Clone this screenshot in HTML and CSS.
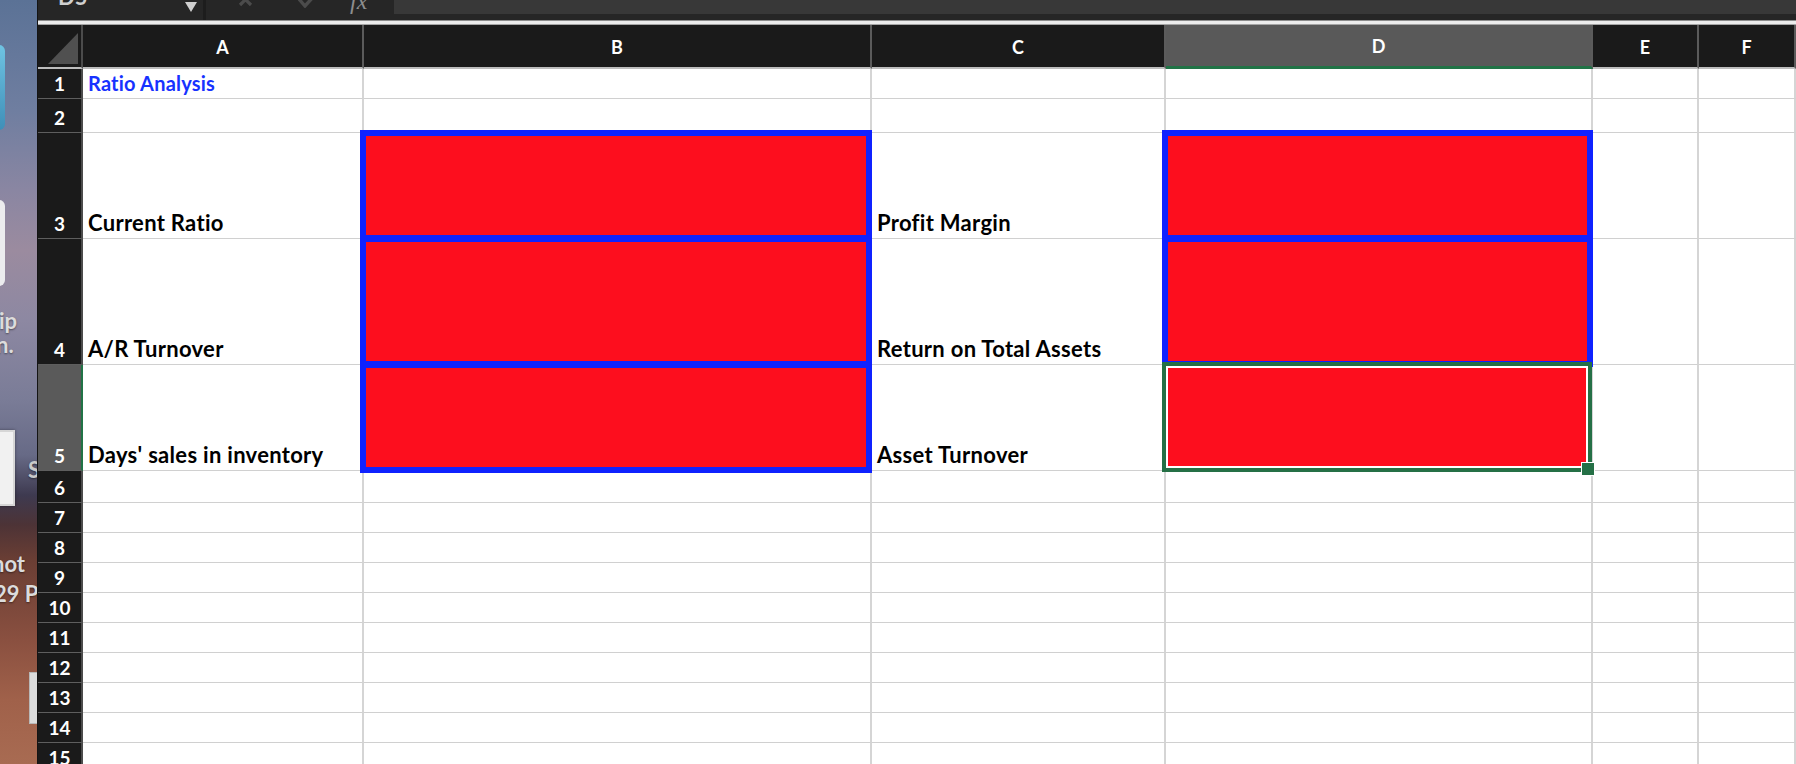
FILE: index.html
```html
<!DOCTYPE html>
<html lang="en">
<head>
<meta charset="utf-8">
<title>Ratio Analysis</title>
<link rel="stylesheet" href="styles.css">
</head>
<body>
<div class="screen">
  <div class="desktop">
    <div class="dk-icon dk-blue"></div>
    <div class="dk-icon dk-white"></div>
    <span class="dk-text dk-ip">ip</span>
    <span class="dk-text dk-n">n.</span>
    <div class="dk-thumb"></div>
    <span class="dk-text dk-s">S</span>
    <span class="dk-text dk-hot">hot</span>
    <span class="dk-text dk-29">29 P</span>
    <div class="dk-doc"></div>
  </div>
  <div class="excel">
    <div class="toolbar">
      <div class="namebox">
        <span class="nb-text">D5</span>
        <span class="nb-arrow"></span>
      </div>
      <div class="tb-icons">
        <svg class="tb-x" width="22" height="8" viewBox="0 0 22 8"><path d="M3 -6 L14 5 M14 -6 L3 5" stroke="#4b4b4b" stroke-width="3.2" fill="none"/></svg>
        <svg class="tb-check" width="18" height="8" viewBox="0 0 18 8"><path d="M0 -2 L7 6 L16 -4" stroke="#4b4b4b" stroke-width="3.4" fill="none"/></svg>
        <span class="tb-fx">fx</span>
      </div>
      <div class="formula"></div>
    </div>
    <div class="divider"></div>
    <div class="sheet">
      <div class="corner"><span class="tri"></span></div>
      <div class="ch">A</div><div class="ch">B</div><div class="ch">C</div><div class="ch ch-sel">D</div><div class="ch">E</div><div class="ch">F</div>

      <div class="rh">1</div><div class="c title">Ratio Analysis</div><div class="c"></div><div class="c"></div><div class="c"></div><div class="c"></div><div class="c"></div>
      <div class="rh">2</div><div class="c"></div><div class="c"></div><div class="c"></div><div class="c"></div><div class="c"></div><div class="c"></div>
      <div class="rh">3</div><div class="c label">Current Ratio</div><div class="c box"></div><div class="c label">Profit Margin</div><div class="c box"></div><div class="c"></div><div class="c"></div>
      <div class="rh">4</div><div class="c label">A/R Turnover</div><div class="c box"></div><div class="c label">Return on Total Assets</div><div class="c box"></div><div class="c"></div><div class="c"></div>
      <div class="rh rh-sel">5</div><div class="c label">Days' sales in inventory</div><div class="c box"></div><div class="c label">Asset Turnover</div><div class="c sel"></div><div class="c"></div><div class="c"></div>
      <div class="rh">6</div><div class="c"></div><div class="c"></div><div class="c"></div><div class="c"></div><div class="c"></div><div class="c"></div>
      <div class="rh">7</div><div class="c"></div><div class="c"></div><div class="c"></div><div class="c"></div><div class="c"></div><div class="c"></div>
      <div class="rh">8</div><div class="c"></div><div class="c"></div><div class="c"></div><div class="c"></div><div class="c"></div><div class="c"></div>
      <div class="rh">9</div><div class="c"></div><div class="c"></div><div class="c"></div><div class="c"></div><div class="c"></div><div class="c"></div>
      <div class="rh">10</div><div class="c"></div><div class="c"></div><div class="c"></div><div class="c"></div><div class="c"></div><div class="c"></div>
      <div class="rh">11</div><div class="c"></div><div class="c"></div><div class="c"></div><div class="c"></div><div class="c"></div><div class="c"></div>
      <div class="rh">12</div><div class="c"></div><div class="c"></div><div class="c"></div><div class="c"></div><div class="c"></div><div class="c"></div>
      <div class="rh">13</div><div class="c"></div><div class="c"></div><div class="c"></div><div class="c"></div><div class="c"></div><div class="c"></div>
      <div class="rh">14</div><div class="c"></div><div class="c"></div><div class="c"></div><div class="c"></div><div class="c"></div><div class="c"></div>
      <div class="rh">15</div><div class="c"></div><div class="c"></div><div class="c"></div><div class="c"></div><div class="c"></div><div class="c"></div>
    </div>
  </div>
</div>
</body>
</html>
```

FILE: styles.css
```css
* { box-sizing: border-box; }
html, body {
  margin: 0;
  padding: 0;
  width: 1796px;
  height: 764px;
  overflow: hidden;
  background: #1a1a1a;
  font-family: Lato, "Open Sans", sans-serif;
}
.screen {
  display: flex;
  width: 1796px;
  height: 764px;
  overflow: hidden;
}

/* desktop strip */
.desktop {
  position: relative;
  flex: 0 0 38px;
  height: 764px;
  overflow: hidden;
  border-right: 1px solid #141414;
  background: linear-gradient(to bottom,
    #5b7296 0px, #6f7ea0 110px, #8a86a2 190px, #9b8b9f 250px,
    #8d88a2 320px, #7a7c97 400px, #676a86 455px, #3e3a50 495px,
    #4d3336 525px, #6a3e34 560px, #8a5040 640px, #a0614a 700px, #a86b52 764px);
}
.dk-icon { position: absolute; border-radius: 6px; }
.dk-blue {
  left: -12px; top: 45px; width: 17px; height: 85px;
  background: linear-gradient(to bottom, #6fc3e2, #3f8fb8);
}
.dk-white {
  left: -12px; top: 200px; width: 17px; height: 86px;
  background: #ececee;
}
.dk-text {
  position: absolute;
  font-weight: 700;
  font-size: 22px;
  line-height: 24px;
  color: #dcdcdc;
  text-shadow: 0 1px 2px rgba(0,0,0,0.45);
  white-space: nowrap;
}
.dk-ip { left: -1px; top: 309px; }
.dk-n { left: -4px; top: 333px; }
.dk-s { left: 28px; top: 458px; color: #c9c9c9; }
.dk-hot { left: -8px; top: 552px; }
.dk-29 { left: -6px; top: 582px; }
.dk-thumb {
  position: absolute;
  left: -6px; top: 430px; width: 21px; height: 76px;
  background: #f1f1f1;
  border: 2px solid #d6d6d6;
  box-shadow: 0 0 3px rgba(0,0,0,0.4);
}
.dk-doc {
  position: absolute;
  left: 29px; top: 672px; width: 14px; height: 52px;
  background: #dcdcdc;
  border: 1px solid #b8b8b8;
}

/* excel window */
.excel {
  flex: 1 1 auto;
  display: flex;
  flex-direction: column;
  min-width: 0;
  background: #1a1a1a;
}
.toolbar {
  flex: 0 0 20px;
  display: flex;
  background: #262626;
  overflow: hidden;
}
.namebox {
  position: relative;
  flex: 0 0 168px;
  height: 20px;
  border-right: 3px solid #1d1d1d;
}
.nb-text {
  position: absolute;
  left: 20px;
  top: -17px;
  font-size: 22px;
  font-weight: 700;
  color: #cfcfcf;
}
.nb-arrow {
  position: absolute;
  left: 147px;
  top: 2px;
  width: 0; height: 0;
  border-left: 6px solid transparent;
  border-right: 6px solid transparent;
  border-top: 10px solid #cfcfcf;
}
.tb-icons {
  position: relative;
  flex: 0 0 188px;
  height: 20px;
}
.tb-x { position: absolute; left: 31px; top: 0; }
.tb-check { position: absolute; left: 92px; top: 0; }
.tb-fx {
  position: absolute;
  left: 144px;
  top: -12px;
  font-family: "Liberation Serif", serif;
  font-style: italic;
  font-size: 24px;
  color: #8e8e8e;
}
.formula {
  flex: 1 1 auto;
  height: 14px;
  background: #383838;
}
.divider {
  flex: 0 0 5px;
  background: #ececec;
  border-top: 1px solid #8d8d8d;
  border-bottom: 1px solid #a5a5a5;
}

/* sheet grid */
.sheet {
  display: grid;
  grid-template-columns: 45px 281px 508px 294px 427px 106px 1fr;
  grid-template-rows: 44px 30px 34px 106px 126px 106px 32px repeat(9, 30px);
  background: #fff;
}
.corner {
  position: relative;
  background: #1a1a1a;
  border-right: 2px solid #4c4c4c;
  border-bottom: 2px solid #bdbdbd;
}
.tri {
  position: absolute;
  right: 3px;
  bottom: 3px;
  width: 0; height: 0;
  border-left: 30px solid transparent;
  border-bottom: 31px solid #505050;
}
.ch {
  display: flex;
  align-items: center;
  justify-content: center;
  background: #1a1a1a;
  color: #fff;
  font-size: 18px;
  font-weight: 700;
  border-right: 2px solid #5b5b5b;
  border-bottom: 2px solid #bdbdbd;
  padding-top: 1px;
}
.ch-sel {
  background: #595959;
  border-bottom: 3px solid #217346;
}
.rh {
  display: flex;
  align-items: flex-end;
  justify-content: center;
  background: #1a1a1a;
  color: #fff;
  font-size: 19px;
  font-weight: 700;
  line-height: 24px;
  padding-bottom: 2px;
  border-right: 2px solid #4c4c4c;
  border-bottom: 1px solid #5e5e5e;
}
.rh-sel {
  background: #5a5a5a;
  border-right: 2px solid #217346;
}
.c {
  position: relative;
  display: flex;
  align-items: flex-end;
  background: #fff;
  border-right: 2px solid #d5d5d5;
  border-bottom: 1px solid #d0d0d0;
  padding: 0 0 3px 5px;
  font-size: 22px;
  line-height: 24px;
  font-weight: 700;
  color: #000;
  white-space: nowrap;
}
.label { letter-spacing: 0.3px; }
.title {
  color: #1732ff;
  font-size: 20px;
  letter-spacing: 0.2px;
  padding-bottom: 3px;
}
.box { background: #fd0e1e; }
.box::after {
  content: "";
  position: absolute;
  top: -3px;
  left: -4px;
  right: -2px;
  bottom: -3px;
  border: 6px solid #0f22ff;
  z-index: 2;
}
.sel { background: #fd0e1e; }
.sel::after {
  content: "";
  position: absolute;
  top: -3px;
  left: -4px;
  right: -1px;
  bottom: -2px;
  border: 4px solid #257046;
  box-shadow: inset 0 0 0 2px #fff;
  z-index: 3;
}
.sel::before {
  content: "";
  position: absolute;
  right: -4px;
  bottom: -6px;
  width: 12px;
  height: 12px;
  background: #257046;
  border: 1px solid #fff;
  z-index: 4;
}
```
